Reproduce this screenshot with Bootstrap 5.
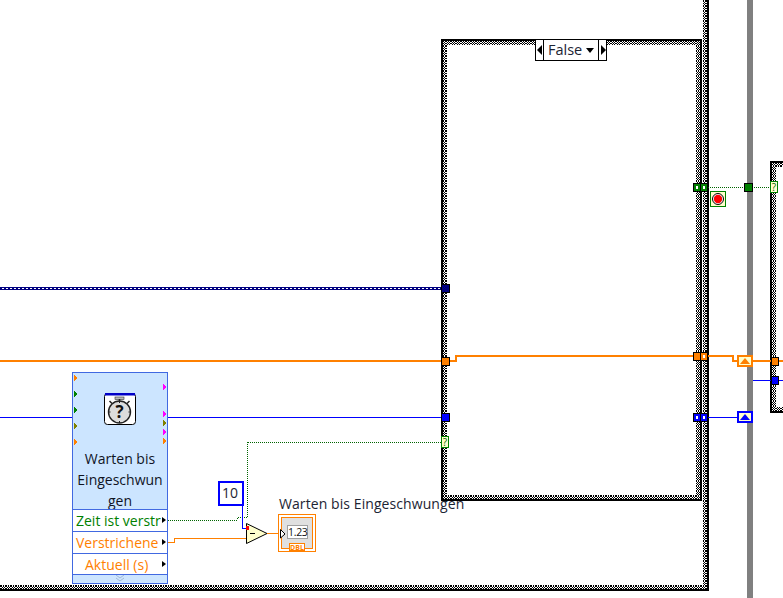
<!DOCTYPE html>
<html lang="de">
<head>
<meta charset="utf-8">
<title>Warten bis Eingeschwungen</title>
<link href="https://cdn.jsdelivr.net/npm/bootstrap@5.3.0/dist/css/bootstrap.min.css" rel="stylesheet">
<style>
html,body{margin:0;background:#fff;overflow:hidden}
.lv-canvas{width:783px;height:598px;overflow:hidden;font-family:"Open Sans","Noto Sans",sans-serif;color:#1c2433}
.lv-wires{left:0;top:0}
.lv-wires text{font-family:"Open Sans","Noto Sans",sans-serif}
.lv-node{left:72px;top:372px;width:96px;height:212px;background:#cce5ff;border:1px solid #4169e1}
.lv-head{height:136px}
.lv-title{left:0;right:0;top:75px;font-size:14px;line-height:21px;color:#10141f}
.lv-row{height:22px;background:#fff;border-top:1px solid #4169e1;font-size:14px;line-height:21px;padding-left:3px;overflow:hidden;white-space:nowrap}
.lv-row:nth-child(4){height:21px}
.lv-green{color:#008000}
.lv-orange{color:#ff8000}
.lv-center{padding-left:12px}
.lv-clip{width:85px;overflow:hidden}
.lv-arrow{right:1px;top:7px;width:0;height:0;border-left:4px solid #000;border-top:3.5px solid transparent;border-bottom:3.5px solid transparent}
.lv-foot{height:9px;border-top:1px solid #4169e1;font-size:0}
.lv-const{left:218px;top:481px;width:26px;height:25px;border:2px solid #0000ff;background:#fff;font-size:14px;line-height:20px;text-align:center;padding-right:2px}
.lv-label{left:279px;top:494px;font-size:14px;line-height:20px;white-space:nowrap;letter-spacing:.08px}
.lv-sel{left:535px;top:39px;width:72px;height:22px;background:#fff;border:1px solid #000;font-size:14.5px;line-height:20px}
.lv-sel-arrow{width:8px;flex:none}
.lv-sel-left{border-right:1px solid #000}
.lv-sel-right{border-left:1px solid #000}
.lv-sel-text{flex:1;padding-left:4px}
.lv-read{left:288px;top:526px;width:19px;height:12px;font-size:10.5px;line-height:12px;text-align:center;color:#111;letter-spacing:-.3px}
.lv-dbl{left:289px;top:544px;width:16px;font-size:7px;line-height:7px;font-weight:700;text-align:center;color:#ff8000}
</style>
</head>
<body>
<div class="lv-canvas position-relative">
<svg class="lv-wires position-absolute" width="783" height="598" viewBox="0 0 783 598" shape-rendering="crispEdges">
<defs>
<pattern id="chk" width="5" height="5" patternUnits="userSpaceOnUse">
<rect width="5" height="5" fill="#fff"/>
<rect x="0" y="0" width="2" height="2" fill="#000"/><rect x="3" y="0" width="1" height="2" fill="#000"/>
<rect x="2" y="2" width="1" height="1" fill="#000"/><rect x="4" y="2" width="1" height="1" fill="#000"/>
<rect x="0" y="3" width="2" height="1" fill="#000"/><rect x="3" y="3" width="1" height="1" fill="#000"/>
<rect x="2" y="4" width="1" height="1" fill="#000"/><rect x="4" y="4" width="1" height="1" fill="#000"/>
</pattern>
<pattern id="dot" width="2" height="2" patternUnits="userSpaceOnUse"><rect width="1" height="2" fill="#006400"/></pattern>
<pattern id="dotv" width="2" height="2" patternUnits="userSpaceOnUse"><rect width="2" height="1" fill="#006400"/></pattern>
<pattern id="clu" width="4" height="1" patternUnits="userSpaceOnUse"><rect width="2" height="1" fill="#000080"/></pattern>
</defs>
<rect x="747" y="0" width="6" height="598" fill="#808080"/>
<rect x="-10" y="-10" width="719" height="601" fill="#000"/>
<rect x="-10" y="-10" width="717" height="599" fill="url(#chk)"/>
<rect x="-10" y="-10" width="713" height="595" fill="#fff"/>
<rect x="441" y="39" width="261" height="462" fill="#000"/>
<rect x="443" y="41" width="257" height="458" fill="url(#chk)"/>
<rect x="447" y="45" width="249" height="450" fill="#fff"/>
<rect x="770" y="161" width="30" height="252" fill="#000"/>
<rect x="772" y="163" width="30" height="248" fill="url(#chk)"/>
<rect x="776" y="167" width="30" height="240" fill="#fff"/>
<rect x="0" y="287" width="441" height="1" fill="#000080"/>
<rect x="0" y="288" width="441" height="1" fill="url(#clu)"/>
<rect x="0" y="289" width="441" height="1" fill="#000080"/>
<rect x="0" y="360" width="441" height="2" fill="#ff8000"/>
<rect x="450" y="360" width="6" height="2" fill="#ff8000"/>
<rect x="455" y="355" width="2" height="7" fill="#ff8000"/>
<rect x="455" y="355" width="239" height="2" fill="#ff8000"/>
<rect x="708" y="355" width="26" height="2" fill="#ff8000"/>
<rect x="732" y="355" width="2" height="7" fill="#ff8000"/>
<rect x="732" y="360" width="6" height="2" fill="#ff8000"/>
<rect x="752" y="360" width="31" height="2" fill="#ff8000"/>
<rect x="0" y="417" width="72" height="1" fill="#0000ff"/>
<rect x="168" y="417" width="273" height="1" fill="#0000ff"/>
<rect x="708" y="417" width="30" height="1" fill="#0000ff"/>
<rect x="753" y="380" width="30" height="1" fill="#0000ff"/>
<rect x="708" y="187" width="62" height="1" fill="url(#dot)"/>
<rect x="247" y="442" width="194" height="1" fill="url(#dot)"/>
<rect x="247" y="442" width="1" height="75" fill="url(#dotv)"/>
<rect x="237" y="517" width="10" height="1" fill="url(#dot)"/>
<rect x="237" y="517" width="1" height="3" fill="url(#dotv)"/>
<rect x="168" y="520" width="69" height="1" fill="url(#dot)"/>
<rect x="242" y="505" width="1" height="24" fill="#0000ff"/>
<rect x="242" y="528" width="5" height="1" fill="#0000ff"/>
<rect x="168" y="542" width="7" height="1" fill="#ff8000"/>
<rect x="174" y="538" width="1" height="5" fill="#ff8000"/>
<rect x="174" y="538" width="72" height="1" fill="#ff8000"/>
<rect x="267" y="533" width="11" height="1" fill="#ff8000"/>
<rect x="441.5" y="284.5" width="8" height="8" fill="#000080" stroke="#000"/>
<rect x="441.5" y="357.5" width="8" height="8" fill="#ff8000" stroke="#000"/>
<rect x="441.5" y="413.5" width="8" height="8" fill="#0000ff" stroke="#000"/>
<rect x="441.5" y="436.5" width="7" height="11" fill="#ffffcc" stroke="#008000"/>
<text x="445" y="446" font-size="10" text-anchor="middle" fill="#006400" shape-rendering="auto">?</text>
<rect x="693.5" y="183.5" width="7" height="8" fill="#008000" stroke="#000"/>
<rect x="700.5" y="183.5" width="7" height="8" fill="#008000" stroke="#000"/>
<rect x="696" y="186" width="2" height="3" fill="#fff"/>
<rect x="703" y="186" width="2" height="3" fill="#fff"/>
<rect x="744.5" y="183.5" width="8" height="8" fill="#008000" stroke="#000"/>
<rect x="770.5" y="181.5" width="7" height="11" fill="#ffffcc" stroke="#008000"/>
<text x="774" y="191" font-size="10" text-anchor="middle" fill="#006400" shape-rendering="auto">?</text>
<rect x="710.5" y="191.5" width="15" height="15" fill="#ffffcc" stroke="#008000"/>
<g shape-rendering="auto">
<circle cx="718" cy="199" r="5.5" fill="#fff" stroke="#000"/>
<circle cx="718" cy="199" r="4.2" fill="#ff0000"/>
</g>
<rect x="693.5" y="352.5" width="7" height="8" fill="#ff8000" stroke="#000"/>
<rect x="700.5" y="352.5" width="7" height="8" fill="#ff8000" stroke="#000"/>
<rect x="703" y="355" width="2" height="3" fill="#fff"/>
<rect x="693.5" y="413.5" width="7" height="8" fill="#0000ff" stroke="#000"/>
<rect x="700.5" y="413.5" width="7" height="8" fill="#0000ff" stroke="#000"/>
<rect x="696" y="416" width="2" height="3" fill="#fff"/>
<rect x="703" y="416" width="2" height="3" fill="#fff"/>
<rect x="738" y="356" width="14" height="10" fill="#ffffcc" stroke="#ff8000" stroke-width="2"/>
<path d="M740 364 L745 358 L750 364 Z" fill="#ff8000" shape-rendering="auto"/>
<rect x="738" y="412" width="14" height="10" fill="#ffffcc" stroke="#0000ff" stroke-width="2"/>
<path d="M740 420 L745 414 L750 420 Z" fill="#0000ff" shape-rendering="auto"/>
<rect x="771.5" y="357.5" width="7" height="8" fill="#ff8000" stroke="#000"/>
<rect x="771.5" y="376.5" width="7" height="8" fill="#0000ff" stroke="#000"/>
<path d="M246.5 523.5 L267 533.5 L246.5 543.5 Z" fill="#ffffcc" stroke="#000" shape-rendering="auto"/>
<rect x="250" y="533" width="5" height="1" fill="#000"/>
<rect x="246" y="526" width="3" height="4" fill="#ff0000"/>
<rect x="278.5" y="514.5" width="37" height="37" fill="#fff" stroke="#ff8000"/>
<rect x="281.5" y="517.5" width="31" height="31" fill="#e0e0e0" stroke="#ff8000"/>
<rect x="287" y="525" width="21" height="14" fill="#a0a0a0"/>
<rect x="288" y="526" width="19" height="12" fill="#fff"/>
<path d="M280.5 529.5 L285 534 L280.5 538 Z" fill="#fff" stroke="#000" shape-rendering="auto"/>
<rect x="289.5" y="543.5" width="15" height="7" fill="#fff" stroke="#ff8000"/>
</svg>

<div class="lv-node position-absolute d-flex flex-column">
  <div class="lv-head position-relative">
    <svg class="position-absolute top-0 start-0" width="94" height="136" viewBox="73 373 94 136">
      <g shape-rendering="crispEdges">
        <path d="M74 375 L77 378 L74 381 Z" fill="#ff8000"/>
        <path d="M74 391 L77 394 L74 397 Z M74 407 L77 410 L74 413 Z" fill="#008000"/>
        <path d="M74 423 L77 426 L74 429 Z" fill="#808000"/>
        <path d="M74 439 L77 442 L74 445 Z" fill="#ff8000"/>
        <path d="M163 384 L166 387 L163 390 Z M163 411 L166 414 L163 417 Z M163 429 L166 432 L163 435 Z" fill="#ff00ff"/>
        <path d="M163 420 L166 423 L163 426 Z" fill="#808000"/>
        <path d="M163 438 L166 441 L163 444 Z" fill="#ff8000"/>
      </g>
      <rect x="104.5" y="393.5" width="31" height="31" rx="3" fill="#fff" stroke="#000"/>
      <rect x="105" y="393" width="30" height="2.5" fill="#0000c8"/>
      <rect x="115" y="397" width="9" height="2.5" fill="#bbb" stroke="#333" stroke-width=".6"/>
      <path d="M119.5 399 V401 M109.5 401 L112 403.5 M129.5 401 L127 403.5" stroke="#222" stroke-width="1.5"/>
      <circle cx="119.5" cy="412" r="11" fill="#dcdcdc" stroke="#222" stroke-width="1.4"/>
      <path d="M119.5 401 V403 M119.5 421 V423 M108.5 412 H110.5 M128.5 412 H130.5" stroke="#222"/>
      <text x="119.5" y="418" font-size="17" font-weight="700" text-anchor="middle" fill="#111" font-family="Open Sans, sans-serif">?</text>
    </svg>
    <div class="lv-title position-absolute text-center">Warten bis<br>Eingeschwun<br>gen</div>
  </div>
  <div class="lv-row position-relative lv-green"><div class="lv-clip">Zeit ist verstr</div><span class="lv-arrow position-absolute"></span></div>
  <div class="lv-row position-relative lv-orange">Verstrichene<span class="lv-arrow position-absolute"></span></div>
  <div class="lv-row position-relative lv-orange lv-center">Aktuell (s)<span class="lv-arrow position-absolute"></span></div>
  <div class="lv-foot d-flex justify-content-center">
    <svg width="10" height="8" viewBox="0 0 10 8"><path d="M1 0 L5 3 L9 0 M1 3 L5 6 L9 3" fill="none" stroke="#9fb8d8"/></svg>
  </div>
</div>

<div class="lv-const position-absolute">10</div>
<div class="lv-label position-absolute">Warten bis Eingeschwungen</div>
<div class="lv-read position-absolute">1.23</div>
<div class="lv-dbl position-absolute">DBL</div>

<div class="lv-sel position-absolute d-flex">
  <div class="lv-sel-arrow lv-sel-left d-flex align-items-center justify-content-center">
    <svg width="6" height="10" viewBox="0 0 6 10"><path d="M0 5 L5 0 V10 Z" fill="#000"/></svg>
  </div>
  <div class="lv-sel-text d-flex align-items-center justify-content-between">
    <span>False</span>
    <svg class="me-1" width="8" height="5" viewBox="0 0 8 5"><path d="M0 0 H8 L4 5 Z" fill="#000"/></svg>
  </div>
  <div class="lv-sel-arrow lv-sel-right d-flex align-items-center justify-content-center">
    <svg width="6" height="10" viewBox="0 0 6 10"><path d="M6 5 L1 0 V10 Z" fill="#000"/></svg>
  </div>
</div>
</div>
<script src="https://cdn.jsdelivr.net/npm/bootstrap@5.3.0/dist/js/bootstrap.bundle.min.js"></script>
</body>
</html>
